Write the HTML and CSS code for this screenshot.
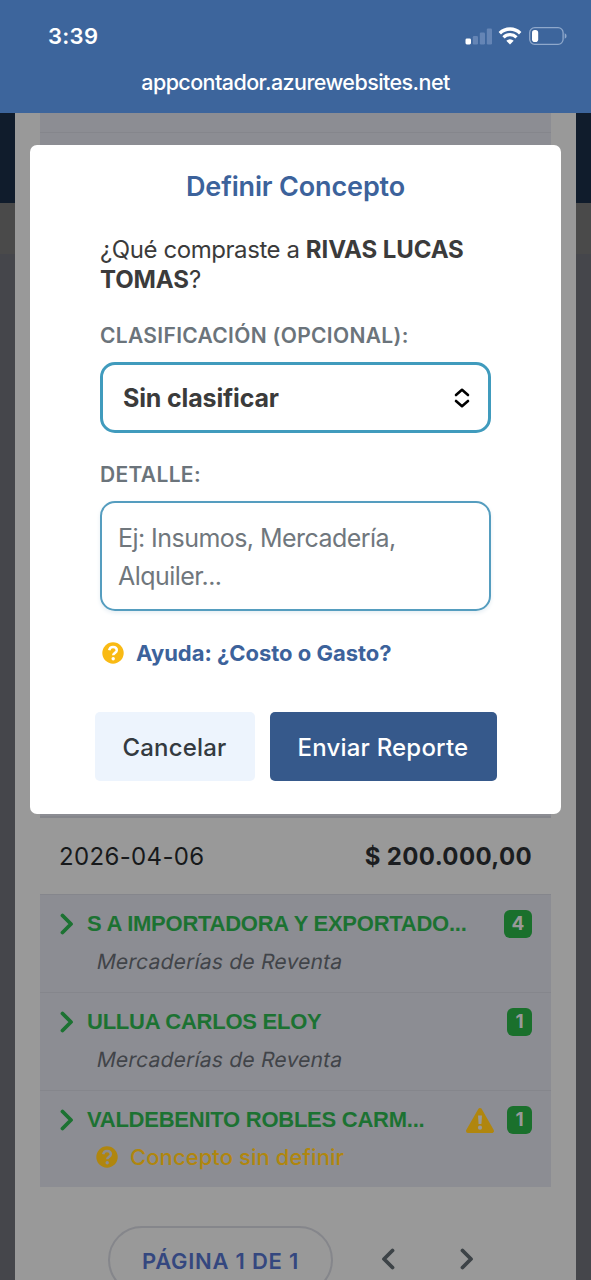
FILE: index.html
```html
<!DOCTYPE html>
<html lang="es">
<head>
<meta charset="utf-8">
<title>Definir Concepto</title>
<link rel="stylesheet" href="styles.css">
</head>
<body>
<header class="browser-bar">
  <div class="status">
    <span class="time">3:39</span>
    <div class="indicators">
      <svg class="signal" width="28" height="17" viewBox="0 0 28 17"><rect x="0.5" y="10.5" width="5.5" height="6" rx="1.4" fill="#fff"/><g fill="#6585b5"><rect x="7.8" y="8" width="5.2" height="8.5" rx="1.2"/><rect x="14.8" y="4.5" width="5.2" height="12" rx="1.2"/><rect x="21.8" y="0.5" width="5.2" height="16" rx="1.2"/></g></svg>
      <svg class="wifi" width="24" height="18" viewBox="0 0 24 18" fill="none" stroke="#fff"><path d="M1.8 6.2A14.6 14.6 0 0 1 22.2 6.2" stroke-width="3.4"/><path d="M5.5 10.3A9.3 9.3 0 0 1 18.5 10.3" stroke-width="3.2"/><path d="M12 17.5L8.3 13.7A5.3 5.3 0 0 1 15.7 13.7Z" fill="#fff" stroke="none"/></svg>
      <svg class="battery" width="38" height="18" viewBox="0 0 38 18"><rect x="0.7" y="0.7" width="33.4" height="16.6" rx="5" fill="none" stroke="#8fa8cb" stroke-width="1.3"/><rect x="3" y="3" width="6.2" height="12" rx="2.8" fill="#fff"/><path d="M35.7 6.2Q37.6 7 37.6 9T35.7 11.8Z" fill="#8fa8cb"/></svg>
    </div>
  </div>
  <div class="url">appcontador.azurewebsites.net</div>
</header>

<main class="page">
  <section class="sheet">
    <div class="table">
      <div class="stripe-top"></div>
      <div class="stripe-body"></div>
      <div class="total-row"><span class="date">2026-04-06</span><strong class="amount">$ 200.000,00</strong></div>
      <div class="supplier">
        <div class="line">
          <svg class="chevron" width="14" height="22" viewBox="0 0 14 22"><path d="M2.5 2.5L11 11L2.5 19.5"/></svg>
          <span class="name">S A IMPORTADORA Y EXPORTADO...</span>
          <span class="badge wide">4</span>
        </div>
        <div class="concept"><span class="slanted">Mercaderías de Reventa</span></div>
      </div>
      <div class="supplier">
        <div class="line">
          <svg class="chevron" width="14" height="22" viewBox="0 0 14 22"><path d="M2.5 2.5L11 11L2.5 19.5"/></svg>
          <span class="name">ULLUA CARLOS ELOY</span>
          <span class="badge">1</span>
        </div>
        <div class="concept"><span class="slanted">Mercaderías de Reventa</span></div>
      </div>
      <div class="supplier">
        <div class="line">
          <svg class="chevron" width="14" height="22" viewBox="0 0 14 22"><path d="M2.5 2.5L11 11L2.5 19.5"/></svg>
          <span class="name">VALDEBENITO ROBLES CARM...</span>
          <svg class="warning" width="30" height="27" viewBox="0 0 30 27"><path d="M15 3L27 24H3Z" fill="#b0860e" stroke="#b0860e" stroke-width="4" stroke-linejoin="round"/><path d="M13 8.5H17L16.4 17H13.6Z" fill="#999"/><circle cx="15" cy="20.7" r="2.1" fill="#999"/></svg>
          <span class="badge">1</span>
        </div>
        <div class="concept pending">
          <svg width="22" height="22" viewBox="0 0 22 22"><circle cx="11" cy="11" r="10.7" fill="#b0860e"/><path d="M7.2 8.3C7.6 6.2 9 5 11 5C13.3 5 14.8 6.4 14.8 8.3C14.8 10.9 11.2 10.8 11.2 13.3" fill="none" stroke="#8c8d93" stroke-width="2.5"/><circle cx="11.2" cy="16.8" r="1.7" fill="#8c8d93"/></svg>
          <span>Concepto sin definir</span>
        </div>
      </div>
    </div>
    <nav class="pager">
      <span class="page-pill">PÁGINA 1 DE 1</span>
      <svg class="arrow prev" width="14" height="22" viewBox="0 0 14 22"><path d="M11.5 2.5L3 11L11.5 19.5"/></svg>
      <svg class="arrow next" width="14" height="22" viewBox="0 0 14 22"><path d="M2.5 2.5L11 11L2.5 19.5"/></svg>
    </nav>
  </section>
</main>

<div class="modal" role="dialog">
  <h2 class="title">Definir Concepto</h2>
  <div class="form">
    <p class="question">¿Qué compraste a <strong>RIVAS LUCAS TOMAS</strong>?</p>
    <label class="label clas">CLASIFICACIÓN (OPCIONAL):</label>
    <div class="select"><span>Sin clasificar</span>
      <svg width="16" height="20" viewBox="0 0 16 20" fill="none" stroke="#000" stroke-width="2.6" stroke-linecap="round" stroke-linejoin="round"><path d="M2 7L8 1.8L14 7M2 13L8 18.2L14 13"/></svg>
    </div>
    <label class="label det">DETALLE:</label>
    <div class="textarea">Ej: Insumos, Mercadería, Alquiler...</div>
    <div class="help">
      <svg width="22" height="22" viewBox="0 0 22 22"><circle cx="11" cy="11" r="10.7" fill="#f9ba14"/><path d="M7.2 8.3C7.6 6.2 9 5 11 5C13.3 5 14.8 6.4 14.8 8.3C14.8 10.9 11.2 10.8 11.2 13.3" fill="none" stroke="#fff" stroke-width="2.5"/><circle cx="11.2" cy="16.8" r="1.7" fill="#fff"/></svg>
      <span>Ayuda: ¿Costo o Gasto?</span>
    </div>
  </div>
  <div class="actions">
    <div class="btn cancel">Cancelar</div>
    <div class="btn send">Enviar Reporte</div>
  </div>
</div>
</body>
</html>
```
FILE: styles.css
```css
* { box-sizing: border-box; }
body {
  margin: 0;
  width: 591px;
  height: 1280px;
  overflow: hidden;
  position: relative;
  font-family: Inter, "Liberation Sans", sans-serif;
  color: #3b3b3b;
}
svg { flex: none; display: block; }

.browser-bar { height: 113px; background: #3d659c; color: #fff; padding: 21px 24px 0 48px; }
.status { display: flex; justify-content: space-between; align-items: center; height: 30px; }
.time { font-size: 22px; font-weight: 600; letter-spacing: 0.3px; }
.indicators { display: flex; align-items: center; }
.wifi { margin-left: 5px; }
.battery { margin-left: 7px; }
.url { font-size: 21.5px; font-weight: 500; line-height: 30px; margin-top: 16px; padding-right: 24px; text-align: center; letter-spacing: -0.57px; }

.page {
  height: 1167px;
  padding: 0 15px;
  background: linear-gradient(#101c2c 0 90px, #4a4a4a 90px 141px, #45464b 141px);
}
.sheet { height: 1167px; background: #999; padding: 0 25px; overflow: hidden; }
.stripe-top { height: 20px; background: #8c8d93; border-bottom: 1px solid #85868c; }
.stripe-body { height: 685px; background: #8c8d93; border-bottom: 2px solid #85868b; }
.total-row { height: 76px; display: flex; justify-content: space-between; align-items: center; padding: 1px 19px 0; color: #17191b; font-size: 24px; }
.date { letter-spacing: 0.35px; }
.amount { font-weight: 700; color: #1b1d20; letter-spacing: 0.35px; }
.supplier { height: 98px; background: #8c8d93; border-top: 1px solid #85868c; padding: 14px 19px 0; }
.supplier:last-child { height: 97px; }
.line { display: flex; align-items: center; height: 30px; }
.chevron { fill: none; stroke: #1c7232; stroke-width: 3.8; stroke-linecap: round; stroke-linejoin: round; margin-left: 1px; }
.name { flex: 1; margin-left: 13px; font-family: "Liberation Sans", Arial, sans-serif; font-weight: 700; font-size: 22px; letter-spacing: -0.25px; color: #1c7232; white-space: nowrap; }
.badge { width: 25px; height: 28px; border-radius: 6px; background: #1a702c; color: #999; font-size: 19px; font-weight: 700; line-height: 28px; text-align: center; }
.badge.wide { width: 28px; }
.warning { margin-right: 12px; }
.concept { font-size: 21px; line-height: 30px; margin-top: 8px; padding-left: 37px; color: #414449; display: flex; align-items: center; }
.slanted { transform: skewX(-11deg); margin-left: 1px; letter-spacing: 0.22px; }
.pending { margin-top: 7px; font-size: 22px; font-weight: 500; letter-spacing: 0.08px; color: #b0860e; gap: 12px; }
.pager { display: flex; margin: 39px 0 0 68px; align-items: center; }
.page-pill { width: 225px; height: 68px; border: 2px solid #85868b; border-radius: 34px; text-align: center; line-height: 66px; font-weight: 600; font-size: 22px; letter-spacing: 0.75px; color: #34477f; }
.arrow { fill: none; stroke: #3d4347; stroke-width: 3.8; stroke-linecap: round; stroke-linejoin: round; margin-bottom: 3px; }
.prev { margin-left: 48px; }
.next { margin-left: 65px; }

.modal { position: absolute; left: 30px; top: 145px; width: 531px; height: 669px; background: #fff; border-radius: 7px; padding-top: 23px; }
.title { margin: 0; text-align: center; font-size: 27px; line-height: 38px; font-weight: 600; color: #3c629b; letter-spacing: -0.15px; }
.form { margin: 29px 70px 0; }
.question { margin: 0; font-size: 24px; line-height: 30px; letter-spacing: -0.43px; }
.question strong { font-weight: 700; letter-spacing: -0.1px; }
.label { display: block; font-size: 21px; line-height: 26px; font-weight: 600; color: #6b747b; letter-spacing: 0.32px; }
.clas { margin-top: 28px; }
.det { margin-top: 29px; }
.select { margin-top: 13px; height: 71px; border: 3px solid #409bbd; border-radius: 15px; display: flex; justify-content: space-between; align-items: center; padding: 0 18px 0 20px; font-weight: 700; font-size: 25px; letter-spacing: -0.15px; }
.textarea { margin-top: 13px; height: 110px; border: 2px solid #559dbf; border-radius: 15px; box-shadow: 0 2px 4px #e6eef3; padding: 16px; font-size: 25px; line-height: 38px; color: #70777d; letter-spacing: -0.55px; }
.help { display: flex; align-items: center; gap: 12px; height: 30px; margin-top: 27px; padding-left: 2px; font-size: 22px; font-weight: 700; letter-spacing: -0.02px; color: #3c629b; }
.actions { display: flex; justify-content: center; gap: 15px; margin-top: 44px; }
.btn { height: 69px; border-radius: 5px; line-height: 71px; text-align: center; font-size: 24px; font-weight: 500; letter-spacing: 0.2px; }
.cancel { width: 160px; background: #edf4fd; color: #343a40; }
.send { width: 227px; background: #36598b; color: #fff; }
```
